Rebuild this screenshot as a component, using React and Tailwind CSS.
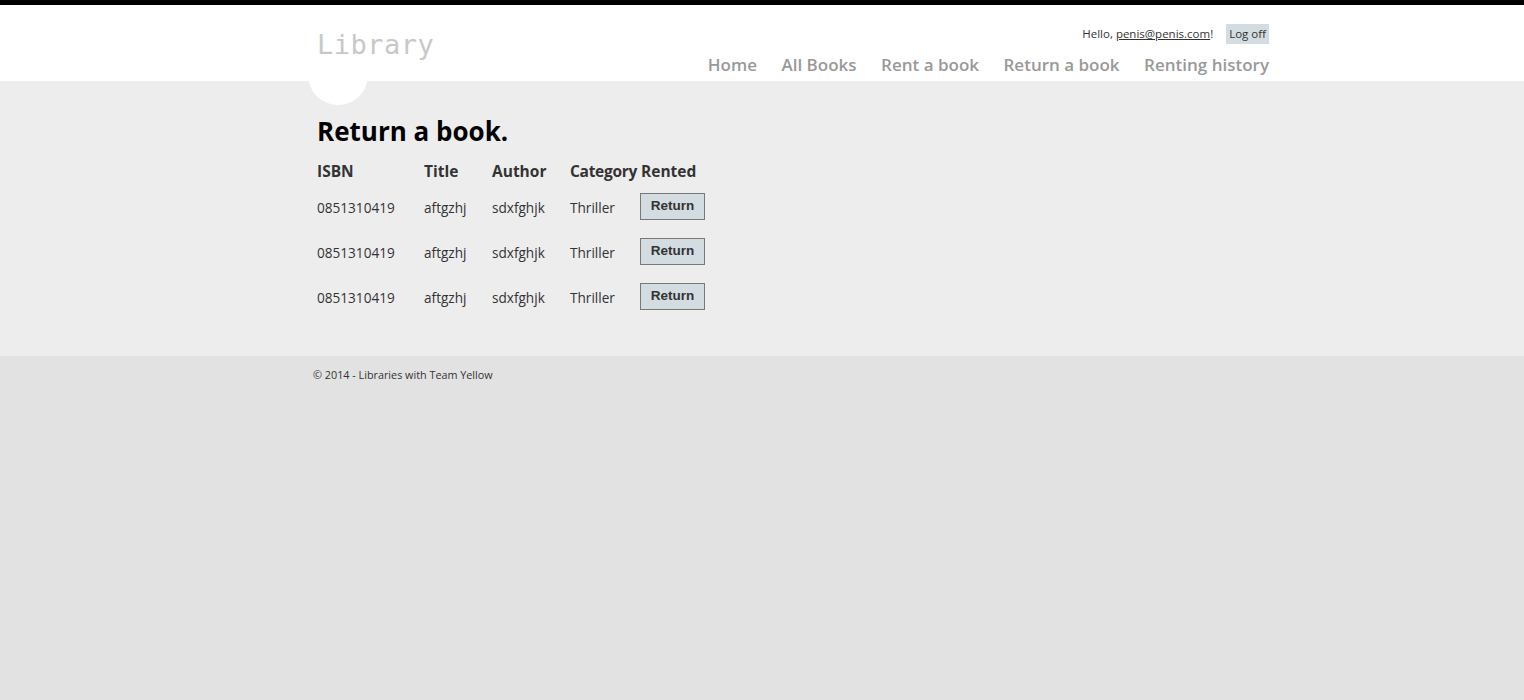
const ROWS = [
  { isbn: '0851310419', title: 'aftgzhj', author: 'sdxfghjk', category: 'Thriller' },
  { isbn: '0851310419', title: 'aftgzhj', author: 'sdxfghjk', category: 'Thriller' },
  { isbn: '0851310419', title: 'aftgzhj', author: 'sdxfghjk', category: 'Thriller' },
]

const NAV = ['Home', 'All Books', 'Rent a book', 'Return a book', 'Renting history']

export default function App() {
  return (
    <div className="min-h-[700px] flex flex-col bg-[#e2e2e2] text-[#333] font-['Open_Sans',sans-serif]">
      <div className="h-[5px] bg-black" />

      <header className="h-[76px] bg-white relative">
        <div className="ml-[309px] w-[960px] relative h-full">
          <div className="absolute left-[-1px] top-[40px] w-[60px] h-[60px] rounded-full bg-white" />
          <div className="absolute left-[8px] top-[26px] font-['DejaVu_Sans_Mono',monospace] text-[27px] leading-none text-[#c8c8c8] tracking-[0.5px]">
            Library
          </div>
          <div className="absolute right-0 top-[19px] flex items-center text-[11.5px] text-[#333]">
            <span>
              Hello, <a className="underline text-[#333]">penis@penis.com</a>!
            </span>
            <span className="ml-[13px] bg-[#d3dce0] px-[3px] h-[20px] flex items-center">Log off</span>
          </div>
          <nav className="absolute right-0 top-[51px] flex gap-[24.5px] text-[17px] font-semibold text-[#999] leading-none">
            {NAV.map((n) => (
              <a key={n}>{n}</a>
            ))}
          </nav>
        </div>
      </header>

      <main className="bg-[#ededed] h-[275px]">
        <div className="ml-[309px] w-[960px] pl-[8px] pt-[37px]">
          <h1 className="text-[26px] font-bold text-black leading-none">Return a book.</h1>
          <div className="mt-[16px] grid grid-cols-[107px_68px_78px_71px_auto] w-max items-center text-[13.6px]">
            <div className="font-bold text-[15.5px] h-[24px] flex items-center">ISBN</div>
            <div className="font-bold text-[15.5px] h-[24px] flex items-center">Title</div>
            <div className="font-bold text-[15.5px] h-[24px] flex items-center">Author</div>
            <div className="font-bold text-[15.5px] h-[24px] flex items-center tracking-[-0.3px]">Category</div>
            <div className="font-bold text-[15.5px] h-[24px] flex items-center">Rented</div>
            {ROWS.map((r, i) => (
              <Row key={i} r={r} first={i === 0} />
            ))}
          </div>
        </div>
      </main>

      <footer className="flex-1">
        <div className="ml-[304px] pl-[9px] pt-[11px] text-[10.8px] text-[#333]">© 2014 - Libraries with Team Yellow</div>
      </footer>
    </div>
  )
}

function Row({ r, first }) {
  const h = first ? 'h-[47px] pt-[2px]' : 'h-[45px]'
  return (
    <>
      <div className={`${h} flex items-center`}>{r.isbn}</div>
      <div className={`${h} flex items-center`}>{r.title}</div>
      <div className={`${h} flex items-center`}>{r.author}</div>
      <div className={`${h} flex items-center`}>{r.category}</div>
      <div className={`${h} flex items-center -ml-[1px]`}>
        <button className="-mt-[4px] w-[65px] h-[27px] bg-[#d3dce0] border border-[#787878] font-['Liberation_Sans',sans-serif] font-bold text-[13.5px] text-[#333]">
          Return
        </button>
      </div>
    </>
  )
}
